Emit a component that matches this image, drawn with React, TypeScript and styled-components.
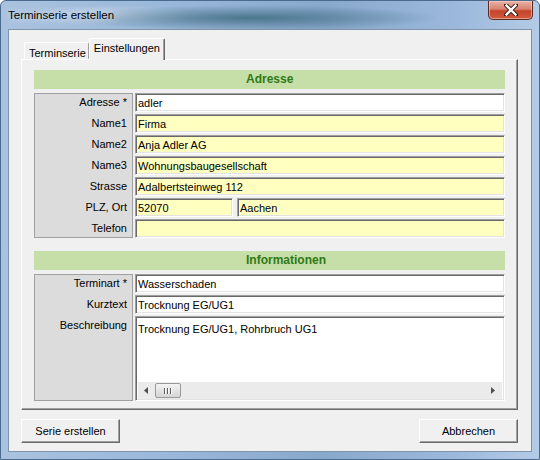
import React from 'react';
import styled, { createGlobalStyle } from 'styled-components';

const GlobalStyle = createGlobalStyle`
	html, body {
		margin: 0;
		padding: 0;
		background: #ffffff;
	}
	body {
		font-family: "Liberation Sans", Arial, sans-serif;
		font-size: 11px;
		color: #000;
	}
`;

const WindowFrame = styled.div`
	width: 540px;
	height: 460px;
	box-sizing: border-box;
	display: flex;
	flex-direction: column;
	border: 1px solid #4a6a8e;
	border-radius: 6px 6px 0 0;
	background:
		radial-gradient(ellipse 190px 13px at 250px 17px, rgba(52, 98, 118, 0.75), rgba(52, 98, 118, 0) 100%),
		radial-gradient(ellipse 90px 10px at 110px 14px, rgba(255, 255, 255, 0.35), rgba(255, 255, 255, 0) 100%),
		linear-gradient(90deg, #a9c2df 0%, #9ab8da 30%, #88a8cc 60%, #9cb9dc 85%, #b4cbe6 100%);
	overflow: hidden;
`;

const TitleBar = styled.div`
	height: 28px;
	display: flex;
	align-items: flex-start;
	flex-shrink: 0;
`;

const TitleText = styled.div`
	font-size: 11.5px;
	line-height: 15px;
	margin-top: 7px;
	padding-left: 7px;
	color: #000;
	text-shadow: 0 0 8px rgba(255, 255, 255, 0.9);
`;

const CloseButton = styled.div`
	margin-left: auto;
	margin-right: 6px;
	width: 45px;
	height: 19px;
	box-sizing: border-box;
	border: 1px solid #5b2c24;
	border-top: none;
	border-radius: 0 0 5px 5px;
	background: linear-gradient(180deg, #e8b2a6 0%, #d9826f 45%, #c5432c 55%, #d05c3f 100%);
	box-shadow: inset 0 0 0 1px rgba(255, 220, 210, 0.5);
	display: flex;
	align-items: center;
	justify-content: center;
`;

const Client = styled.div`
	flex: 1;
	margin: 0 7px 7px 7px;
	border: 1px solid #7f93aa;
	background: #f0f0f0;
	padding: 8px 13px 8px 12px;
	display: flex;
	flex-direction: column;
`;

const TabStrip = styled.div`
	height: 21px;
	display: flex;
	align-items: flex-end;
	padding-left: 3px;
	position: relative;
	z-index: 1;
`;

const Tab = styled.div<{ $active?: boolean }>`
	box-sizing: border-box;
	height: ${p => (p.$active ? '22px' : '17px')};
	margin-bottom: ${p => (p.$active ? '-1px' : '0')};
	padding: ${p => (p.$active ? '3px 4px 0 4px' : '4px 2px 0 4px')};
	background: #f0f0f0;
	border-top: 1px solid #ffffff;
	border-left: 1px solid #ffffff;
	border-right: 1px solid ${p => (p.$active ? '#696969' : '#a0a0a0')};
	box-shadow: ${p => (p.$active ? 'inset -1px 0 0 #a0a0a0' : 'none')};
	border-radius: 2px 2px 0 0;
	line-height: 13px;
	white-space: nowrap;
`;

const TabPanel = styled.div`
	flex: 1;
	border-top: 1px solid #ffffff;
	border-left: 1px solid #ffffff;
	border-right: 1px solid #696969;
	border-bottom: 1px solid #696969;
	box-shadow: inset -1px -1px 0 #a0a0a0;
	padding: 10px 12px 0 12px;
	display: flex;
	flex-direction: column;
`;

const Section = styled.div<{ $gap?: number }>`
	margin-top: ${p => p.$gap || 0}px;
	display: flex;
	flex-direction: column;
`;

const SectionHeader = styled.div`
	height: 19px;
	background: #c6dea7;
	color: #2f7a16;
	font-weight: bold;
	font-size: 12px;
	line-height: 19px;
	padding-left: 212px;
	margin-bottom: 4px;
`;

const SectionBody = styled.div`
	display: flex;
	gap: 2px;
`;

const LabelColumn = styled.div`
	width: 99px;
	box-sizing: border-box;
	background: #dcdcdc;
	border: 1px solid #a0a0a0;
	display: flex;
	flex-direction: column;
`;

const Label = styled.div<{ $last?: boolean }>`
	height: ${p => (p.$last ? 'auto' : '21px')};
	flex: ${p => (p.$last ? '1' : 'none')};
	line-height: 17px;
	text-align: right;
	padding-right: 5px;
	white-space: nowrap;
`;

const FieldColumn = styled.div`
	flex: 1;
	display: flex;
	flex-direction: column;
	gap: 2px;
`;

const FieldRow = styled.div`
	display: flex;
	gap: 4px;
`;

const Field = styled.div<{ $fill?: string; $width?: number }>`
	box-sizing: border-box;
	height: 19px;
	${p => (p.$width ? `width: ${p.$width}px;` : 'flex: 1;')}
	background: ${p => p.$fill || '#ffffff'};
	border-top: 1px solid #a0a0a0;
	border-left: 1px solid #a0a0a0;
	border-right: 1px solid #ffffff;
	border-bottom: 1px solid #ffffff;
	box-shadow: inset 1px 1px 0 #696969, inset -1px -1px 0 #e3e3e3;
	padding: 1px 2px 0 2px;
	line-height: 16px;
	white-space: nowrap;
	overflow: hidden;
`;

const MemoBox = styled.div`
	box-sizing: border-box;
	height: 85px;
	background: #ffffff;
	border-top: 1px solid #a0a0a0;
	border-left: 1px solid #a0a0a0;
	border-right: 1px solid #ffffff;
	border-bottom: 1px solid #ffffff;
	box-shadow: inset 1px 1px 0 #696969, inset -1px -1px 0 #e3e3e3;
	padding: 2px 2px 1px 2px;
	display: flex;
	flex-direction: column;
`;

const MemoText = styled.div`
	flex: 1;
	padding: 4px 0 0 0;
	line-height: 13px;
	white-space: nowrap;
`;

const HScrollBar = styled.div`
	height: 17px;
	background: #ebebeb;
	display: flex;
	align-items: center;
	padding: 0 2px 0 0;
`;

const ScrollArrow = styled.div<{ $end?: boolean }>`
	width: 15px;
	height: 17px;
	margin-left: ${p => (p.$end ? 'auto' : '0')};
	display: flex;
	align-items: center;
	justify-content: center;
`;

const ScrollThumb = styled.div`
	width: 26px;
	height: 15px;
	box-sizing: border-box;
	margin-left: 2px;
	border: 1px solid #9a9a9a;
	border-radius: 2px;
	background: linear-gradient(180deg, #f4f4f4 0%, #e3e3e3 50%, #d6d6d6 100%);
	display: flex;
	align-items: center;
	justify-content: center;
	gap: 1px;
`;

const Grip = styled.div`
	width: 1px;
	height: 6px;
	background: #5e5e5e;
	box-shadow: 1px 0 0 #ffffff;
	margin-right: 1px;
`;

const ButtonRow = styled.div`
	margin-top: 9px;
	display: flex;
	justify-content: space-between;
`;

const Button = styled.div`
	width: 99px;
	height: 24px;
	box-sizing: border-box;
	background: #f0f0f0;
	border-top: 1px solid #ffffff;
	border-left: 1px solid #ffffff;
	border-right: 1px solid #696969;
	border-bottom: 1px solid #696969;
	box-shadow: inset -1px -1px 0 #a0a0a0;
	display: flex;
	align-items: center;
	justify-content: center;
	line-height: 13px;
`;

const yellow = '#ffffc0';

type Row = { label: string; value?: string };

const addressRows: Row[] = [
	{ label: 'Name1', value: 'Firma' },
	{ label: 'Name2', value: 'Anja Adler AG' },
	{ label: 'Name3', value: 'Wohnungsbaugesellschaft' },
	{ label: 'Strasse', value: 'Adalbertsteinweg 112' },
];

const CloseGlyph = () => (
	<svg width="14" height="12" viewBox="0 0 14 12">
		<path d="M2 1 L12 11 M12 1 L2 11" stroke="#3a1a14" strokeWidth="4.2" strokeLinecap="square" />
		<path d="M2.5 1.5 L11.5 10.5 M11.5 1.5 L2.5 10.5" stroke="#ffffff" strokeWidth="2.4" strokeLinecap="square" />
	</svg>
);

const ArrowLeft = () => (
	<svg width="4" height="7" viewBox="0 0 4 7">
		<path d="M4 0 L0 3.5 L4 7 Z" fill="#505050" />
	</svg>
);

const ArrowRight = () => (
	<svg width="4" height="7" viewBox="0 0 4 7">
		<path d="M0 0 L4 3.5 L0 7 Z" fill="#505050" />
	</svg>
);

const App = () => {
	return (
		<>
			<GlobalStyle />
			<WindowFrame>
				<TitleBar>
					<TitleText>Terminserie erstellen</TitleText>
					<CloseButton>
						<CloseGlyph />
					</CloseButton>
				</TitleBar>
				<Client>
					<TabStrip>
						<Tab>Terminserie</Tab>
						<Tab $active>Einstellungen</Tab>
					</TabStrip>
					<TabPanel>
						<Section>
							<SectionHeader>Adresse</SectionHeader>
							<SectionBody>
								<LabelColumn>
									<Label>Adresse *</Label>
									{addressRows.map(row => (
										<Label key={`addr_label_${row.label}`}>{row.label}</Label>
									))}
									<Label>PLZ, Ort</Label>
									<Label $last>Telefon</Label>
								</LabelColumn>
								<FieldColumn>
									<Field>adler</Field>
									{addressRows.map(row => (
										<Field key={`addr_field_${row.label}`} $fill={yellow}>{row.value}</Field>
									))}
									<FieldRow>
										<Field $fill={yellow} $width={98}>52070</Field>
										<Field $fill={yellow}>Aachen</Field>
									</FieldRow>
									<Field $fill={yellow} />
								</FieldColumn>
							</SectionBody>
						</Section>
						<Section $gap={13}>
							<SectionHeader>Informationen</SectionHeader>
							<SectionBody>
								<LabelColumn>
									<Label>Terminart *</Label>
									<Label>Kurztext</Label>
									<Label $last>Beschreibung</Label>
								</LabelColumn>
								<FieldColumn>
									<Field>Wasserschaden</Field>
									<Field>Trocknung EG/UG1</Field>
									<MemoBox>
										<MemoText>Trocknung EG/UG1, Rohrbruch UG1</MemoText>
										<HScrollBar>
											<ScrollArrow><ArrowLeft /></ScrollArrow>
											<ScrollThumb>
												<Grip />
												<Grip />
												<Grip />
											</ScrollThumb>
											<ScrollArrow $end><ArrowRight /></ScrollArrow>
										</HScrollBar>
									</MemoBox>
								</FieldColumn>
							</SectionBody>
						</Section>
					</TabPanel>
					<ButtonRow>
						<Button>Serie erstellen</Button>
						<Button>Abbrechen</Button>
					</ButtonRow>
				</Client>
			</WindowFrame>
		</>
	);
};

export default App;
